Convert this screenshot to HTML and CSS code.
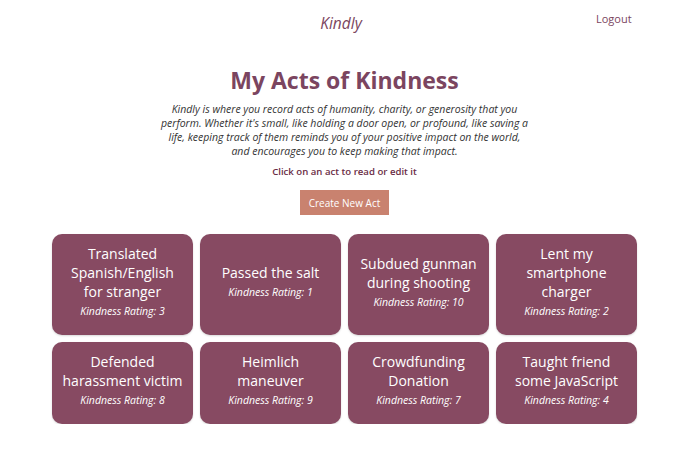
FILE: index.html
```html
<!DOCTYPE html>
<html>
<head>
<meta charset="utf-8">
<link rel="stylesheet" href="styles.css">
</head>
<body>
<header class="topbar">
  <div class="brand">Kindly</div>
  <a class="logout" href="#">Logout</a>
</header>
<main class="page">
  <h1 class="title">My Acts of Kindness</h1>
  <p class="intro">Kindly is where you record acts of humanity, charity, or generosity that you perform. Whether it's small, like holding a door open, or profound, like saving a life, keeping track of them reminds you of your positive impact on the world,<br>and encourages you to keep making that impact.</p>
  <p class="hint">Click on an act to read or edit it</p>
  <button class="create">Create New Act</button>
  <section class="grid">
    <div class="card"><div class="act">Translated Spanish/English for stranger</div><div class="rating">Kindness Rating: 3</div></div>
    <div class="card"><div class="act">Passed the salt</div><div class="rating">Kindness Rating: 1</div></div>
    <div class="card"><div class="act">Subdued gunman during shooting</div><div class="rating">Kindness Rating: 10</div></div>
    <div class="card"><div class="act">Lent my smartphone charger</div><div class="rating">Kindness Rating: 2</div></div>
    <div class="card"><div class="act">Defended harassment victim</div><div class="rating">Kindness Rating: 8</div></div>
    <div class="card"><div class="act">Heimlich maneuver</div><div class="rating">Kindness Rating: 9</div></div>
    <div class="card"><div class="act">Crowdfunding Donation</div><div class="rating">Kindness Rating: 7</div></div>
    <div class="card"><div class="act">Taught friend some JavaScript</div><div class="rating">Kindness Rating: 4</div></div>
  </section>
</main>
</body>
</html>
```
FILE: styles.css
```css
* { box-sizing: border-box; }
body {
  margin: 0;
  background: #fff;
  font-family: "Open Sans", "Liberation Sans", sans-serif;
  color: #333;
}
.topbar {
  position: relative;
  height: 50px;
  display: flex;
  justify-content: center;
  align-items: flex-start;
}
.brand {
  margin-top: 13px;
  margin-left: -18px;
  font-family: "Open Sans", sans-serif;
  font-style: italic;
  font-size: 15.5px;
  line-height: 20px;
  color: #7b4560;
}
.logout {
  position: absolute;
  left: 596px;
  top: 11px;
  font-size: 11px;
  color: #7b4560;
  text-decoration: none;
}
.page {
  width: 585px;
  margin-left: 52px;
  display: flex;
  flex-direction: column;
  align-items: center;
}
.title {
  margin: 13px 0 5px;
  font-family: "Open Sans", sans-serif;
  font-weight: 700;
  font-size: 23px;
  line-height: 34px;
  color: #7b4560;
}
.intro {
  width: 370px;
  margin: 0;
  font-style: italic;
  font-size: 10.5px;
  line-height: 14px;
  text-align: center;
  color: #333;
}
.hint {
  margin: 7px 0 0;
  font-size: 9.6px;
  font-weight: 600;
  line-height: 14px;
  color: #6a2c45;
}
.create {
  margin-top: 11px;
  height: 25px;
  padding: 0 9px;
  border: none;
  background: #c9826f;
  color: #fff;
  font-family: "Open Sans", sans-serif;
  font-size: 10px;
}
.grid {
  margin-top: 19px;
  width: 100%;
  display: grid;
  grid-template-columns: repeat(4, 1fr);
  gap: 7px;
}
.card {
  background: #874a62;
  border-radius: 10px;
  padding: 10px 10px 14px;
  display: flex;
  flex-direction: column;
  justify-content: center;
  text-align: center;
  color: #fff;
  box-shadow: 0 1px 2px rgba(0,0,0,0.15);
}
.act {
  font-size: 14px;
  line-height: 19px;
}
.rating {
  margin: 3px 0;
  font-style: italic;
  font-size: 10.5px;
  line-height: 14px;
}
```
